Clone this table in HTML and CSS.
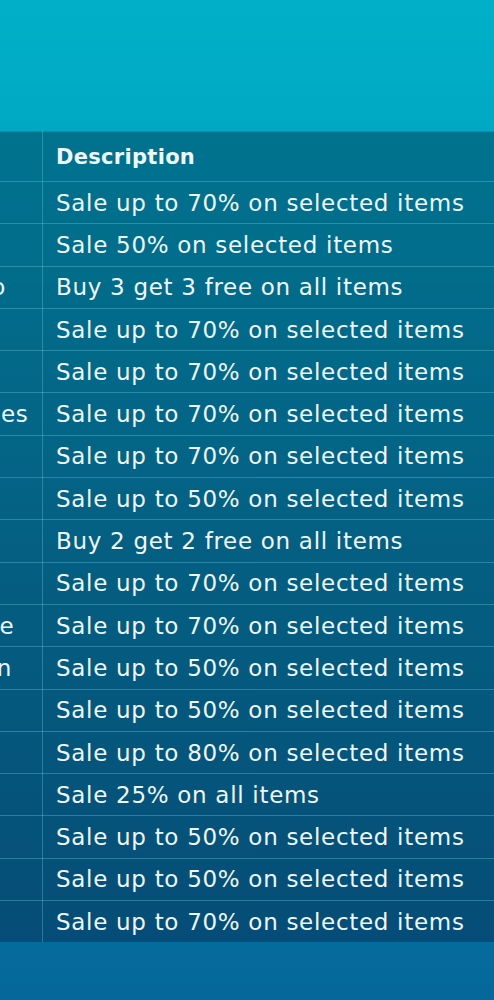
FILE: index.html
```
<!DOCTYPE html>
<html lang="en">
<head>
    <meta charset="UTF-8">
    <title>Offers</title>
    <link rel="stylesheet" href="styles.css">
</head>
<body>
<div class="page">
    <div class="table-wrap">
        <table class="offers">
            <thead>
            <tr>
                <th class="store">Store</th>
                <th class="desc">Description</th>
            </tr>
            </thead>
            <tbody>
            <tr><td class="store">Asos</td><td class="desc">Sale up to 70% on selected items</td></tr>
            <tr><td class="store">Boots</td><td class="desc">Sale 50% on selected items</td></tr>
            <tr><td class="store">Radley Studio</td><td class="desc">Buy 3 get 3 free on all items</td></tr>
            <tr><td class="store">Zara</td><td class="desc">Sale up to 70% on selected items</td></tr>
            <tr><td class="store">Mango</td><td class="desc">Sale up to 70% on selected items</td></tr>
            <tr><td class="store">Skechers Shoes</td><td class="desc">Sale up to 70% on selected items</td></tr>
            <tr><td class="store">Next</td><td class="desc">Sale up to 70% on selected items</td></tr>
            <tr><td class="store">Gap</td><td class="desc">Sale up to 50% on selected items</td></tr>
            <tr><td class="store">H&amp;M</td><td class="desc">Buy 2 get 2 free on all items</td></tr>
            <tr><td class="store">Uniqlo</td><td class="desc">Sale up to 70% on selected items</td></tr>
            <tr><td class="store">Monsoon Shoe</td><td class="desc">Sale up to 70% on selected items</td></tr>
            <tr><td class="store">Jaeger London</td><td class="desc">Sale up to 50% on selected items</td></tr>
            <tr><td class="store">Primark</td><td class="desc">Sale up to 50% on selected items</td></tr>
            <tr><td class="store">Topshop</td><td class="desc">Sale up to 80% on selected items</td></tr>
            <tr><td class="store">Superdry</td><td class="desc">Sale 25% on all items</td></tr>
            <tr><td class="store">Nike</td><td class="desc">Sale up to 50% on selected items</td></tr>
            <tr><td class="store">Puma</td><td class="desc">Sale up to 50% on selected items</td></tr>
            <tr><td class="store">Levi's</td><td class="desc">Sale up to 70% on selected items</td></tr>
            </tbody>
        </table>
    </div>
</div>
</body>
</html>
```

FILE: styles.css
```
*{margin: 0;padding: 0;}

body{
    font-family: "DejaVu Sans", "Liberation Sans", sans-serif;
    color: #eef7f9;
}

.page{
    height: 1000px;
    padding-top: 131px;
    box-sizing: border-box;
    background: linear-gradient(180deg, #00b0c8 0%, #00a8c3 14%, #0592b6 45%, #067aa4 75%, #05679a 100%);
}

.table-wrap{
    overflow: hidden;
}

.offers{
    width: 737px;
    margin-left: -175px;
    table-layout: fixed;
    border-collapse: collapse;
    background: linear-gradient(180deg, rgba(0, 40, 70, .42) 0%, rgba(5, 40, 75, .45) 100%);
    font-size: 23px;
    letter-spacing: .7px;
}

.offers th,
.offers td{
    text-align: left;
    white-space: nowrap;
    overflow: hidden;
    padding: 0 13px;
    border-bottom: 1px solid rgba(110, 205, 225, .35);
}
.offers tbody tr:last-child td{
    border-bottom: 0;
}

.offers .store{
    width: 191px;
    border-right: 1px solid rgba(110, 205, 225, .35);
}

.offers th{
    height: 49px;
    font-size: 21px;
    font-weight: 600;
    letter-spacing: .3px;
    border-top: 1px solid rgba(110, 205, 225, .25);
}
.offers td{
    height: 41.3px;
}
```
